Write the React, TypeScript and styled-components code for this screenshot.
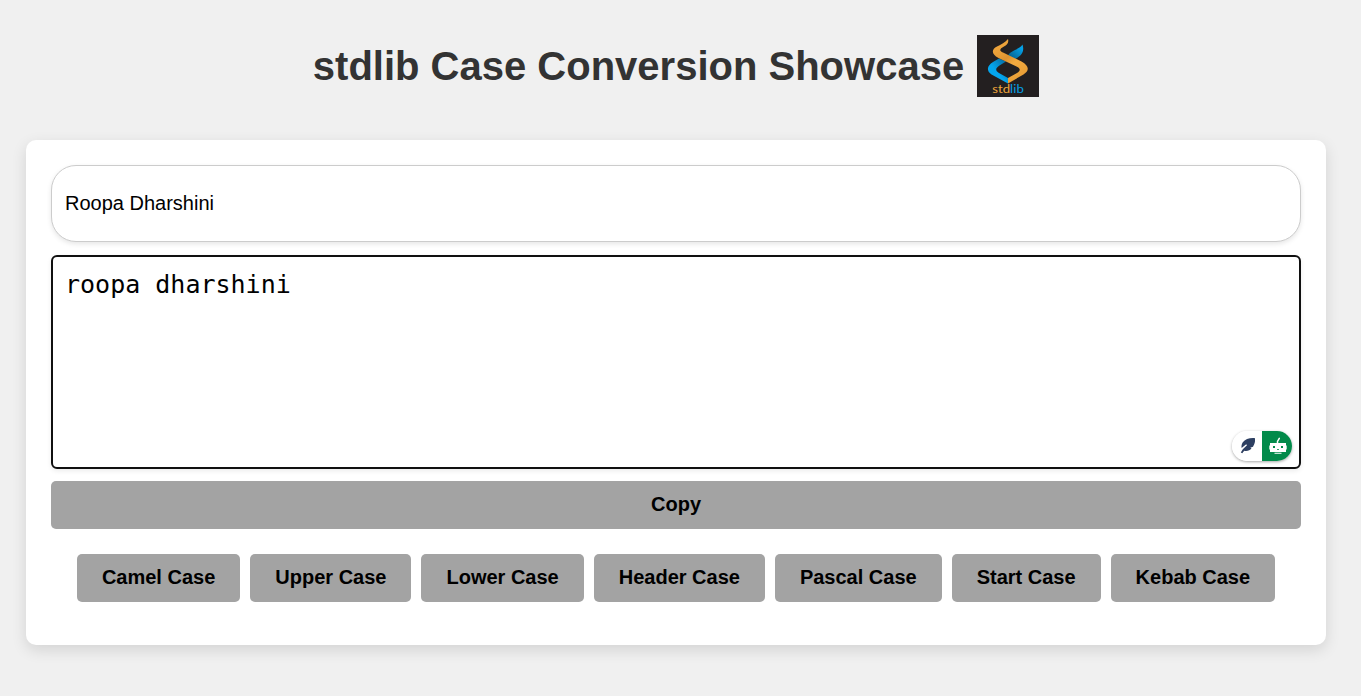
import React, { useState } from 'react';
import styled, { createGlobalStyle } from 'styled-components';

const GlobalStyle = createGlobalStyle`
  * { box-sizing: border-box; }
  body {
    margin: 0;
    background: #f0f0f0;
    font-family: "Liberation Sans", Arial, sans-serif;
    overflow: hidden;
  }
`;

const Page = styled.main`
  width: 1352px;
  min-height: 696px;
  padding: 35px 26px 0;
`;

const Header = styled.header`
  display: flex;
  justify-content: center;
  align-items: center;
  gap: 13px;
  height: 62px;
  margin-bottom: 43px;
`;

const Title = styled.h1`
  margin: 0;
  color: #333;
  font-size: 40px;
  line-height: 46px;
  white-space: nowrap;
`;

const Logo = styled.svg`
  display: block;
  width: 62px;
  height: 62px;
`;

const Card = styled.section`
  display: flex;
  flex-direction: column;
  height: 505px;
  padding: 25px;
  background: #fff;
  border-radius: 10px;
  box-shadow: 0 5px 15px rgba(0, 0, 0, 0.12);
`;

const TextInput = styled.input`
  width: 100%;
  height: 77px;
  margin-bottom: 13px;
  padding: 0 13px;
  border: 1px solid #ccc;
  border-radius: 25px;
  outline: none;
  color: #000;
  background: #fff;
  font: 20px "Liberation Sans", Arial, sans-serif;
  box-shadow: 0 2px 5px rgba(0, 0, 0, 0.1);
`;

const OutputWrap = styled.div`
  position: relative;
  height: 214px;
  margin-bottom: 12px;
`;

const Output = styled.textarea`
  display: block;
  width: 100%;
  height: 214px;
  padding: 12px 12px 10px;
  border: 2px solid #101010;
  border-radius: 6px;
  outline: none;
  resize: none;
  color: #000;
  background: #fff;
  font: 25px/32px "DejaVu Sans Mono", monospace;
  box-shadow: 0 2px 5px rgba(0, 0, 0, 0.08);
`;

const AssistantPill = styled.div`
  position: absolute;
  right: 9px;
  bottom: 8px;
  display: flex;
  width: 60px;
  height: 30px;
  border-radius: 15px;
  overflow: hidden;
  box-shadow: 0 1px 3px rgba(0, 0, 0, 0.35);
`;

const PillHalf = styled.span<{ $active?: boolean }>`
  display: flex;
  flex: 1;
  background: ${({ $active }) => ($active ? '#028a4a' : '#fff')};
`;

const Button = styled.button`
  height: 48px;
  padding: 0 25px 2px;
  border: none;
  border-radius: 5px;
  background: #a3a3a3;
  color: #000;
  font: bold 20px "Liberation Sans", Arial, sans-serif;
  white-space: nowrap;
`;

const ButtonRow = styled.div`
  display: flex;
  justify-content: center;
  gap: 10px;
  margin-top: 25px;
`;

const cases = ['Camel Case', 'Upper Case', 'Lower Case', 'Header Case', 'Pascal Case', 'Start Case', 'Kebab Case'];

const words = (text: string) => text.trim().split(/[\s_-]+/).filter(Boolean);
const capital = (word: string) => word.charAt(0).toUpperCase() + word.slice(1).toLowerCase();

function convert(text: string, kind: string) {
  const parts = words(text);
  const pascal = parts.map(capital).join('');
  switch (kind) {
    case 'Camel Case': return pascal.charAt(0).toLowerCase() + pascal.slice(1);
    case 'Upper Case': return text.toUpperCase();
    case 'Header Case': return parts.map(capital).join('-');
    case 'Pascal Case': return pascal;
    case 'Start Case': return parts.map(capital).join(' ');
    case 'Kebab Case': return parts.join('-').toLowerCase();
    default: return text.toLowerCase();
  }
}

function StdlibLogo() {
  return (
    <Logo viewBox="0 0 62 62" role="img" aria-label="stdlib">
      <defs>
        <linearGradient id="orange" gradientUnits="userSpaceOnUse" x1="18" y1="6" x2="44" y2="44">
          <stop offset="0" stopColor="#f3aa3f" />
          <stop offset="0.35" stopColor="#e59a35" />
          <stop offset="0.45" stopColor="#dc9230" />
          <stop offset="0.62" stopColor="#f3aa3f" />
          <stop offset="1" stopColor="#e79d36" />
        </linearGradient>
        <linearGradient id="blueArm" x1="1" y1="0" x2="0" y2="1">
          <stop offset="0.2" stopColor="#04a0e6" />
          <stop offset="1" stopColor="#075780" />
        </linearGradient>
        <linearGradient id="blueBand" x1="0" y1="1" x2="1" y2="0">
          <stop offset="0.45" stopColor="#04a6ee" />
          <stop offset="1" stopColor="#075f91" />
        </linearGradient>
      </defs>
      <rect width="62" height="62" fill="#231f20" />
      <path d="M45.500 9.500C47.200 14.500 46 18.500 42 21.500L38.500 24L31 20.500C32 18.500 34 17 37 15.500C41 13.500 44 12 45.500 9.500Z" fill="url(#blueArm)" />
      <path d="M22 23.500L16 27C9.500 31 9.500 36 14.500 39.500L31 48.500V43L22 38C18 35.500 18.500 33 22.500 30.500L29 26.500Z" fill="url(#blueBand)" />
      <path d="M31 4C32 8 30 10 27 11.500C22.500 14 22 15.500 26 17.500L44.500 26.500C52.500 31 52.500 36 46.500 39.500L31 48.500V43L40 38C44 35.500 43.500 33.500 39.500 31.500L21.500 23C14.500 19.500 14 14.500 20 11.500C24 9.500 28.500 7.500 31 4Z" fill="url(#orange)" />
      <text x="15.300" y="58.300" fontFamily="Lato, sans-serif" fontSize="11" fontWeight="400" textLength="31.500" lengthAdjust="spacingAndGlyphs" fill="#f0a63a" stroke="none">
        std<tspan fill="#05a0e5">lib</tspan>
      </text>
    </Logo>
  );
}

function FeatherIcon() {
  return (
    <svg width="30" height="30" viewBox="0 0 30 30" aria-hidden="true">
      <path d="M22.800 7C18 6.500 13 8 10.800 11.300C9.500 13.300 9.300 15.200 9.600 17L14.200 13.300L15 14.200L10.800 18.300L8.800 21.500L10.300 22.300L12.200 19.700C15 20.500 18 19.500 19.500 17.200L18.200 16.700L21 15.700L22.300 13C23.200 11 23.200 9 22.800 7Z" fill="#2d3f61" />
    </svg>
  );
}

function RobotIcon() {
  return (
    <svg width="30" height="30" viewBox="0 0 30 30" aria-hidden="true">
      <path d="M15.500 12V10.500L17.300 7.300" fill="none" stroke="#fff" strokeWidth="1.500" strokeLinecap="round" />
      <path d="M8 12H24V21H8ZM7.300 14.500H8V18.500H7.300ZM24 14.500H24.700V18.500H24ZM12.500 21.700H19.500V22.700H12.500Z" fill="#fff" />
      <rect x="11" y="15" width="2" height="2" fill="#028a4a" />
      <rect x="19" y="15" width="2" height="2" fill="#028a4a" />
      <path d="M15 18.500H17" stroke="#028a4a" strokeWidth="0.800" />
    </svg>
  );
}

export default function App() {
  const [text, setText] = useState('Roopa Dharshini');
  const [output, setOutput] = useState('roopa dharshini');
  return (
    <>
      <GlobalStyle />
      <Page>
        <Header>
          <Title>stdlib Case Conversion Showcase</Title>
          <StdlibLogo />
        </Header>
        <Card>
          <TextInput value={text} onChange={(e) => setText(e.target.value)} aria-label="Text" />
          <OutputWrap>
            <Output value={output} readOnly spellCheck={false} aria-label="Converted text" />
            <AssistantPill>
              <PillHalf><FeatherIcon /></PillHalf>
              <PillHalf $active><RobotIcon /></PillHalf>
            </AssistantPill>
          </OutputWrap>
          <Button onClick={() => navigator.clipboard?.writeText(output)}>Copy</Button>
          <ButtonRow>
            {cases.map((kind) => (
              <Button key={kind} onClick={() => setOutput(convert(text, kind))}>{kind}</Button>
            ))}
          </ButtonRow>
        </Card>
      </Page>
    </>
  );
}
